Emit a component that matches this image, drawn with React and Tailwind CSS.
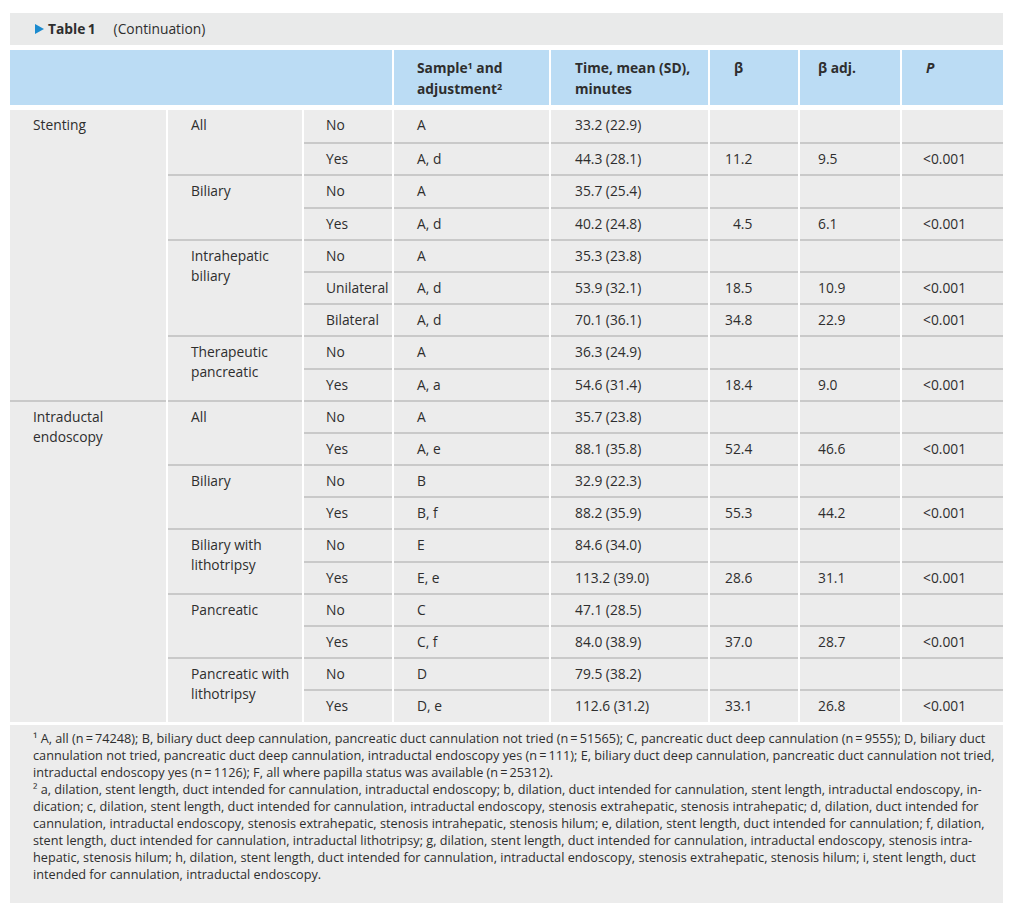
import React from "react";

// --- Table data: group -> subgroup -> rows [status, sample, time, beta, betaAdj, p] ---
const groups = [
  {
    label: ["Stenting"],
    subs: [
      {
        label: ["All"],
        rows: [
          ["No", "A", "33.2 (22.9)", "", "", ""],
          ["Yes", "A, d", "44.3 (28.1)", "11.2", "9.5", "<0.001"],
        ],
      },
      {
        label: ["Biliary"],
        rows: [
          ["No", "A", "35.7 (25.4)", "", "", ""],
          ["Yes", "A, d", "40.2 (24.8)", "\u20074.5", "6.1", "<0.001"],
        ],
      },
      {
        label: ["Intrahepatic", "biliary"],
        rows: [
          ["No", "A", "35.3 (23.8)", "", "", ""],
          ["Unilateral", "A, d", "53.9 (32.1)", "18.5", "10.9", "<0.001"],
          ["Bilateral", "A, d", "70.1 (36.1)", "34.8", "22.9", "<0.001"],
        ],
      },
      {
        label: ["Therapeutic", "pancreatic"],
        rows: [
          ["No", "A", "36.3 (24.9)", "", "", ""],
          ["Yes", "A, a", "54.6 (31.4)", "18.4", "9.0", "<0.001"],
        ],
      },
    ],
  },
  {
    label: ["Intraductal", "endoscopy"],
    subs: [
      {
        label: ["All"],
        rows: [
          ["No", "A", "35.7 (23.8)", "", "", ""],
          ["Yes", "A, e", "88.1 (35.8)", "52.4", "46.6", "<0.001"],
        ],
      },
      {
        label: ["Biliary"],
        rows: [
          ["No", "B", "32.9 (22.3)", "", "", ""],
          ["Yes", "B, f", "88.2 (35.9)", "55.3", "44.2", "<0.001"],
        ],
      },
      {
        label: ["Biliary with", "lithotripsy"],
        rows: [
          ["No", "E", "84.6 (34.0)", "", "", ""],
          ["Yes", "E, e", "113.2 (39.0)", "28.6", "31.1", "<0.001"],
        ],
      },
      {
        label: ["Pancreatic"],
        rows: [
          ["No", "C", "47.1 (28.5)", "", "", ""],
          ["Yes", "C, f", "84.0 (38.9)", "37.0", "28.7", "<0.001"],
        ],
      },
      {
        label: ["Pancreatic with", "lithotripsy"],
        rows: [
          ["No", "D", "79.5 (38.2)", "", "", ""],
          ["Yes", "D, e", "112.6 (31.2)", "33.1", "26.8", "<0.001"],
        ],
      },
    ],
  },
];

const spanClass = {
  2: "row-span-2",
  3: "row-span-3",
  9: "row-span-9",
  10: "row-span-10",
};

// left padding per data column (status, sample, time, beta, beta adj, p)
const colPad = ["pl-[22px]", "pl-[23px]", "pl-[24px]", "pl-[15px]", "pl-[18px]", "pl-[21px]"];

const footnoteLines = [
  "\u00b9 A, all (n\u2009=\u200974248); B, biliary duct deep cannulation, pancreatic duct cannulation not tried (n\u2009=\u200951565); C, pancreatic duct deep cannulation (n\u2009=\u20099555); D, biliary duct",
  "cannulation not tried, pancreatic duct deep cannulation, intraductal endoscopy yes (n\u2009=\u2009111); E, biliary duct deep cannulation, pancreatic duct cannulation not tried,",
  "intraductal endoscopy yes (n\u2009=\u20091126); F, all where papilla status was available (n\u2009=\u200925312).",
  "\u00b2 a, dilation, stent length, duct intended for cannulation, intraductal endoscopy; b, dilation, duct intended for cannulation, stent length, intraductal endoscopy, in-",
  "dication; c, dilation, stent length, duct intended for cannulation, intraductal endoscopy, stenosis extrahepatic, stenosis intrahepatic; d, dilation, duct intended for",
  "cannulation, intraductal endoscopy, stenosis extrahepatic, stenosis intrahepatic, stenosis hilum; e, dilation, stent length, duct intended for cannulation; f, dilation,",
  "stent length, duct intended for cannulation, intraductal lithotripsy; g, dilation, stent length, duct intended for cannulation, intraductal endoscopy, stenosis intra-",
  "hepatic, stenosis hilum; h, dilation, stent length, duct intended for cannulation, intraductal endoscopy, stenosis extrahepatic, stenosis hilum; i, stent length, duct",
  "intended for cannulation, intraductal endoscopy.",
];

const cols = "grid-cols-[156px_134px_88px_155px_157px_88px_100px_101px]";

function Cell({ first, className = "", children }) {
  return (
    <div
      className={`bg-[#ececec] pt-[5px] leading-[20px] ${first ? "" : "border-t-2 border-[#c9c9c9]"} ${className}`}
    >
      {children}
    </div>
  );
}

export default function App() {
  let rowIndex = 0;
  const cells = [];

  groups.forEach((g, gi) => {
    const groupRows = g.subs.reduce((n, s) => n + s.rows.length, 0);
    g.subs.forEach((s, si) => {
      s.rows.forEach((r, ri) => {
        const first = rowIndex === 0;
        if (si === 0 && ri === 0) {
          cells.push(
            <Cell key={`g${gi}`} first={first} className={`pl-[23px] ${spanClass[groupRows]}`}>
              {g.label.map((l) => (
                <div key={l}>{l}</div>
              ))}
            </Cell>
          );
        }
        if (ri === 0) {
          cells.push(
            <Cell key={`s${gi}-${si}`} first={first} className={`pl-[23px] ${spanClass[s.rows.length]}`}>
              {s.label.map((l) => (
                <div key={l}>{l}</div>
              ))}
            </Cell>
          );
        }
        r.forEach((v, ci) => {
          cells.push(
            <Cell key={`r${rowIndex}-${ci}`} first={first} className={`whitespace-pre ${colPad[ci]}`}>
              {v}
            </Cell>
          );
        });
        rowIndex++;
      });
    });
  });

  return (
    <div
      className="min-h-screen bg-white pt-[13px] pl-[10px] text-[#2e2e2e] text-[13.8px]"
      style={{ fontFamily: '"Open Sans", "Noto Sans", sans-serif' }}
    >
      <div className="w-[993px]">
        {/* title band */}
        <div className="flex h-[32px] items-center bg-[#e9eaea] pl-[25px]">
          <svg width="9" height="10" viewBox="0 0 9 10" className="mr-[4px]">
            <path d="M0 0 L9 5 L0 10 Z" fill="#1b8bcf" />
          </svg>
          <span className="font-bold">Table&#8201;1</span>
          <span className="ml-[18px]">(Continuation)</span>
        </div>

        {/* header */}
        <div className={`mt-[5px] grid ${cols} gap-x-[2px] bg-white`}>
          <div className="col-span-3 h-[54.5px] bg-[#bbdcf4]" />
          <div className="bg-[#bbdcf4] pl-[23px] pt-[7px] font-bold leading-[21px]">
            Sample<sup className="text-[9px]">1</sup> and
            <br />
            adjustment<sup className="text-[9px]">2</sup>
          </div>
          <div className="bg-[#bbdcf4] pl-[24px] pt-[7px] font-bold leading-[21px]">
            Time, mean (SD),
            <br />
            minutes
          </div>
          <div className="bg-[#bbdcf4] pl-[24px] pt-[7px] font-bold leading-[21px]">β</div>
          <div className="bg-[#bbdcf4] pl-[18px] pt-[7px] font-bold leading-[21px]">β adj.</div>
          <div className="bg-[#bbdcf4] pl-[24px] pt-[7px] font-bold italic leading-[21px]">P</div>
        </div>

        {/* body */}
        <div className={`mt-[5.5px] grid ${cols} auto-rows-[32.2px] gap-x-[2px] bg-white`}>
          {cells}
        </div>

        {/* footnotes */}
        <div className="mt-[3px] h-[178px] bg-[#ececec] pl-[23px] pt-[5px] text-[12.7px] leading-[17.1px]">
          {footnoteLines.map((l, i) => (
            <div key={i} className="whitespace-nowrap">
              {l}
            </div>
          ))}
        </div>
      </div>
    </div>
  );
}
